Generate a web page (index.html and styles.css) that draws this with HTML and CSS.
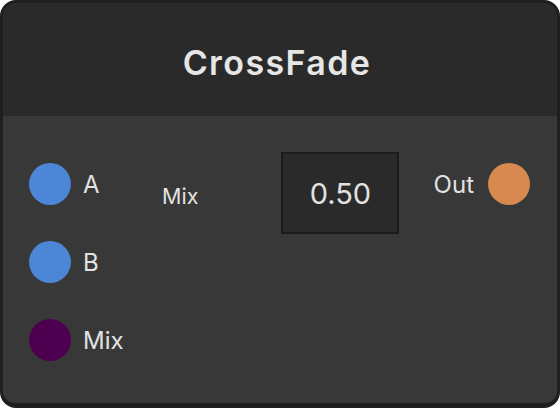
FILE: index.html
```html
<!DOCTYPE html>
<html lang="en">
<head>
  <meta charset="UTF-8" />
  <title>CrossFade</title>
  <link rel="stylesheet" href="styles.css">
</head>
<body>

  <div class="node">
    <div class="node-header">CrossFade</div>

    <div class="node-body">
      <div class="inputs">
        <div class="port"><span class="dot dot-audio"></span><span>A</span></div>
        <div class="port"><span class="dot dot-audio"></span><span>B</span></div>
        <div class="port"><span class="dot dot-control"></span><span>Mix</span></div>
      </div>

      <div class="param">
        <span class="param-label">Mix</span>
        <div class="param-value">0.50</div>
      </div>

      <div class="outputs">
        <div class="port"><span>Out</span><span class="dot dot-out"></span></div>
      </div>
    </div>
  </div>

</body>
</html>
```

FILE: styles.css
```css
body {
  margin: 0;
  background: #fff;
  font-family: Inter, 'Noto Sans', sans-serif;
  color: #e2e2e2;
}

.node {
  box-sizing: border-box;
  width: 560px;
  height: 408px;
  background: #383838;
  border: 3px solid #1f1f1f;
  border-bottom-width: 5px;
  border-radius: 16px;
  overflow: hidden;
}

.node-header {
  height: 113px;
  background: #2a2a2a;
  display: flex;
  align-items: center;
  justify-content: center;
  font-size: 34px;
  font-weight: 600;
  letter-spacing: 1.4px;
  color: #e6e6e6;
  padding-top: 6px;
  padding-right: 6px;
  box-sizing: border-box;
}

.node-body {
  display: flex;
  align-items: flex-start;
  padding: 36px 27px 0 26px;
}

.inputs {
  display: flex;
  flex-direction: column;
  gap: 36px;
  width: 133px;
  margin-top: 11px;
}

.port {
  display: flex;
  align-items: center;
  gap: 12px;
  font-size: 24px;
  height: 42px;
}

.dot {
  width: 42px;
  height: 42px;
  border-radius: 50%;
  flex-shrink: 0;
}

.dot-audio { background: #4c86d6; }
.dot-control { background: #4e0050; }
.dot-out { background: #d7894f; }

.param {
  display: flex;
  align-items: center;
  gap: 83px;
}

.param-label {
  font-size: 21.5px;
  margin-top: 6px;
}

.param-value {
  box-sizing: border-box;
  width: 118px;
  height: 82px;
  background: #2a2a2a;
  border: 2px solid #1c1c1c;
  display: flex;
  align-items: center;
  justify-content: center;
  font-size: 29px;
}

.outputs {
  margin-left: auto;
  margin-top: 11px;
}

.outputs .port {
  gap: 14px;
}
```
